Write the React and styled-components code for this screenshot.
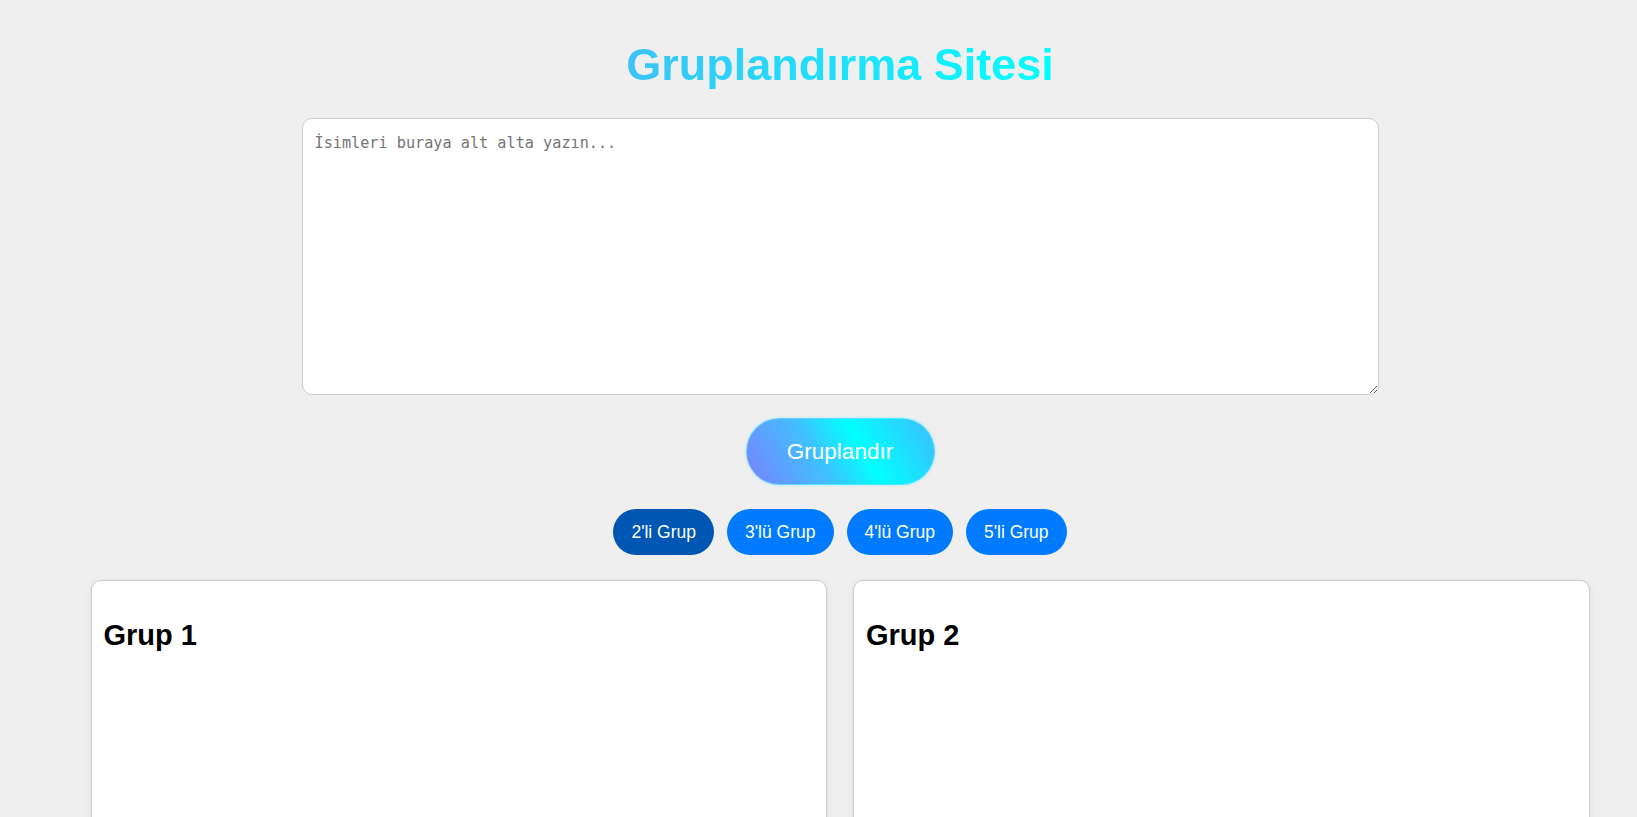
import React, { useState } from "react";
import styled, { createGlobalStyle } from "styled-components";

const GlobalStyle = createGlobalStyle`
  html, body {
    margin: 0;
    padding: 0;
    height: 100%;
    overflow: hidden;
    background-color: #efefef;
    font-family: "Liberation Sans", Arial, sans-serif;
  }
`;

const sizes = [
  { n: 2, label: "2'li Grup" },
  { n: 3, label: "3'lü Grup" },
  { n: 4, label: "4'lü Grup" },
  { n: 5, label: "5'li Grup" },
];

export default function App() {
  const [size, setSize] = useState(2);
  const [text, setText] = useState("");

  return (
    <>
      <GlobalStyle />
      <Page>
        <Title>Gruplandırma Sitesi</Title>
        <NamesInput
          value={text}
          onChange={(e) => setText(e.target.value)}
          placeholder="İsimleri buraya alt alta yazın..."
        />
        <GroupButton>Gruplandır</GroupButton>
        <SizeRow>
          {sizes.map((s) => (
            <SizeButton key={s.n} $active={size === s.n} onClick={() => setSize(s.n)}>
              {s.label}
            </SizeButton>
          ))}
        </SizeRow>
        <Cards>
          <Card>
            <CardTitle>Grup 1</CardTitle>
          </Card>
          <Card>
            <CardTitle>Grup 2</CardTitle>
          </Card>
        </Cards>
      </Page>
    </>
  );
}

const Page = styled.div`
  height: 100vh;
  box-sizing: border-box;
  padding: 39px 0 0 43px;
  display: flex;
  flex-direction: column;
  align-items: center;
  & > * {
    flex-shrink: 0;
  }
`;

const Title = styled.h1`
  margin: 0 0 27px;
  font-size: 45px;
  font-weight: bold;
  background: linear-gradient(to right, #3cc3f7, #00ffff);
  -webkit-background-clip: text;
  background-clip: text;
  color: transparent;
`;

const NamesInput = styled.textarea`
  width: 1077px;
  height: 277px;
  box-sizing: border-box;
  padding: 15px 12px;
  border: 1px solid #cccccc;
  border-radius: 10px;
  background: #ffffff;
  font-family: "DejaVu Sans Mono", "Liberation Mono", monospace;
  font-size: 15.2px;
  outline: none;
  ::placeholder {
    color: #767676;
  }
`;

const GroupButton = styled.button`
  margin-top: 23px;
  width: 189px;
  height: 67px;
  border: 1px solid rgba(120, 230, 255, 0.6);
  border-radius: 40px;
  background: linear-gradient(60deg, #7a80ff 0%, #40c0ff 38%, #00ffff 60%, #3ebcff 100%);
  color: #ffffff;
  font-family: "Liberation Sans", Arial, sans-serif;
  font-size: 22.5px;
  cursor: pointer;
  box-shadow: 0 0 3px rgba(0, 230, 255, 0.35);
`;

const SizeRow = styled.div`
  margin-top: 24px;
  display: flex;
  gap: 13px;
`;

const SizeButton = styled.button`
  height: 46px;
  padding: 0 18px;
  border: none;
  border-radius: 25px;
  background-color: ${(p) => (p.$active ? "#0056b3" : "#007bff")};
  color: #ffffff;
  font-family: "Liberation Sans", Arial, sans-serif;
  font-size: 17.5px;
  cursor: pointer;
`;

const Cards = styled.div`
  margin-top: 25px;
  width: 1499px;
  display: grid;
  grid-template-columns: 1fr 1fr;
  gap: 26px;
`;

const Card = styled.div`
  height: 320px;
  box-sizing: border-box;
  padding: 14px 12px;
  background: #ffffff;
  border: 1px solid #cccccc;
  border-radius: 10px;
  box-shadow: 0 2px 6px rgba(0, 0, 0, 0.08);
`;

const CardTitle = styled.h2`
  margin: 24px 0 0;
  font-size: 29px;
  font-weight: bold;
  color: #000000;
`;
